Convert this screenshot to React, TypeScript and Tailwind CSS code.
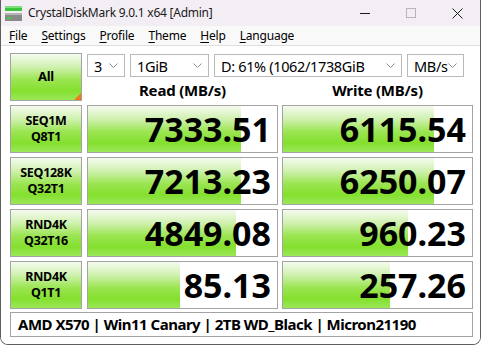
import React from 'react';

const rows = [
  { l1: 'SEQ1M', l2: 'Q8T1', read: '7333.51', write: '6115.54' },
  { l1: 'SEQ128K', l2: 'Q32T1', read: '7213.23', write: '6250.07' },
  { l1: 'RND4K', l2: 'Q32T16', read: '4849.08', write: '960.23' },
  { l1: 'RND4K', l2: 'Q1T1', read: '85.13', write: '257.26' },
];

const menus = ['File', 'Settings', 'Profile', 'Theme', 'Help', 'Language'];

// log scale meter, like the app: (1 + log10(v)) / 6
const meter = (v: string) => Math.min(100, ((1 + Math.log10(parseFloat(v))) / 6) * 100);

const green =
  'bg-[linear-gradient(to_bottom,#f5fbef_0%,#d0f1b0_28%,#9be552_56%,#84df2e_80%,#9ae857_100%)]';

const AppIcon = () => (
  <svg width="17" height="15" viewBox="0 0 17 15">
    <rect x="0" y="0" width="17" height="5" fill="#3cc43c" />
    <rect x="0" y="0" width="17" height="2" fill="#7ee07a" />
    <rect x="0" y="7" width="17" height="8" fill="#8a8a8a" />
    <rect x="0" y="7" width="17" height="2" fill="#b4b4b4" />
    <rect x="2" y="11" width="4" height="2" fill="#40d040" />
  </svg>
);

const Chevron = () => (
  <svg width="9" height="5" viewBox="0 0 9 5" className="shrink-0">
    <path d="M0.5 0.5 L4.5 4.5 L8.5 0.5" fill="none" stroke="#8a8a8a" strokeWidth="1" />
  </svg>
);

const Select = ({ w, text }: { w: string; text: string }) => (
  <div className={`${w} h-[23px] border border-[#b9b9b9] bg-white flex items-center justify-between pl-[6px] pr-[6px]`}>
    <span className="text-[14.5px] leading-[18px] text-black whitespace-nowrap tracking-[-0.35px]">{text}</span>
    <Chevron />
  </div>
);

const Cell = ({ value }: { value: string }) => (
  <div className="relative w-[191px] h-[48px] border border-[#a3a3a3] bg-white">
    <div className={`absolute left-0 top-0 bottom-0 ${green}`} style={{ width: `${meter(value)}%` }} />
    <div className="relative h-full flex items-center justify-end pr-[6px] text-[34px] font-bold leading-none text-black tracking-[0px]">
      {value}
    </div>
  </div>
);

export default function App() {
  return (
    <div className="w-[482px] h-[347px] bg-white" style={{ fontFamily: '"Noto Sans", "Open Sans", sans-serif' }}>
      <div className="w-[481px] h-[345px] flex flex-col border-x border-b border-[#5e5e5e] rounded-b-[8px] overflow-hidden bg-white">
        {/* title bar */}
        <div className="h-[26px] shrink-0 bg-[#f3eef4] flex items-center">
          <div className="pl-[4px] pr-[6px] flex items-center"><AppIcon /></div>
          <span className="text-[12px] leading-none text-[#1a1a1a] tracking-[-0.25px]">CrystalDiskMark 9.0.1 x64 [Admin]</span>
          <div className="ml-auto flex h-full">
            <div className="w-[46px] h-full flex items-center justify-center">
              <svg width="10" height="10" viewBox="0 0 10 10"><path d="M0 5.5 H10" stroke="#1a1a1a" strokeWidth="1" /></svg>
            </div>
            <div className="w-[46px] h-full flex items-center justify-center">
              <svg width="10" height="10" viewBox="0 0 10 10"><rect x="0.5" y="0.5" width="9" height="9" fill="none" stroke="#b8b4ba" strokeWidth="1" /></svg>
            </div>
            <div className="w-[46px] h-full flex items-center justify-center">
              <svg width="11" height="11" viewBox="0 0 11 11"><path d="M0.5 0.5 L10.5 10.5 M10.5 0.5 L0.5 10.5" stroke="#1a1a1a" strokeWidth="1" /></svg>
            </div>
          </div>
        </div>
        {/* menu bar */}
        <div className="h-[20px] shrink-0 bg-[#f9f9f9] border-b border-[#dedede] flex items-center gap-[14px] pl-[8px] text-[12px] leading-none text-black tracking-[-0.2px]">
          {menus.map((m) => (
            <span key={m}>
              <span className="underline underline-offset-[2px]">{m[0]}</span>
              {m.slice(1)}
            </span>
          ))}
        </div>
        {/* body */}
        <div className="flex-1 bg-white pl-[9px] pt-[7px] flex flex-col">
          <div className="flex h-[48px] gap-[5px]">
            <div className={`relative w-[72px] h-[48px] border border-[#a3a3a3] ${green} flex items-center justify-center`}>
              <span className="text-[13px] font-bold text-black tracking-[-0.3px]">All</span>
              <div className="absolute right-0 bottom-0 w-0 h-0 border-l-[7px] border-l-transparent border-b-[7px] border-b-[#f07a1a]" />
            </div>
            <div className="flex flex-col">
              <div className="flex gap-[5px] pt-[1px]">
                <Select w="w-[38px]" text="3" />
                <Select w="w-[79px]" text="1GiB" />
                <Select w="w-[188px]" text="D: 61% (1062/1738GiB" />
                <Select w="w-[57px]" text="MB/s" />
              </div>
              <div className="flex gap-[4px] mt-[6px] text-[15px] font-bold leading-none text-black">
                <div className="w-[191px] text-center tracking-[-0.2px]">Read (MB/s)</div>
                <div className="w-[191px] text-center tracking-[-0.2px]">Write (MB/s)</div>
              </div>
            </div>
          </div>
          <div className="flex flex-col gap-[4px] mt-[4px]">
            {rows.map((r, i) => (
              <div key={i} className="flex">
                <div className={`w-[72px] h-[48px] border border-[#a3a3a3] ${green} flex flex-col items-center justify-center gap-[4px] text-[12.5px] font-bold leading-none text-black tracking-[-0.3px]`}>
                  <span>{r.l1}</span>
                  <span>{r.l2}</span>
                </div>
                <div className="ml-[5px]"><Cell value={r.read} /></div>
                <div className="ml-[4px]"><Cell value={r.write} /></div>
              </div>
            ))}
          </div>
          <div className="mt-[3px] w-[463px] h-[25px] border border-[#a3a3a3] bg-white flex items-center pl-[7px] text-[15px] font-bold leading-none text-black tracking-[-0.5px] whitespace-nowrap">
            AMD X570 | Win11 Canary | 2TB WD_Black | Micron21190
          </div>
        </div>
      </div>
    </div>
  );
}
